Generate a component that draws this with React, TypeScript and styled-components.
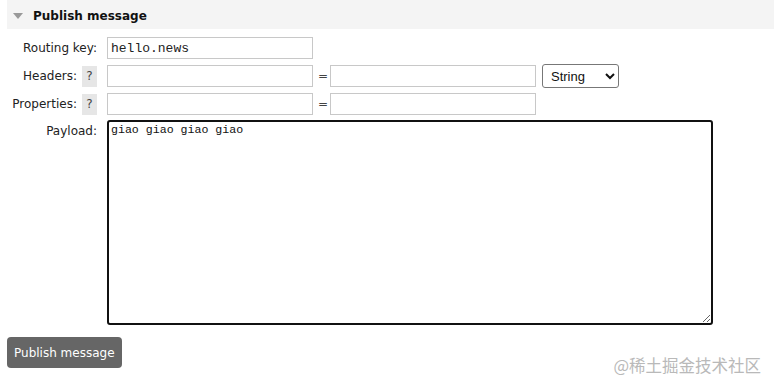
import styled, { createGlobalStyle } from "styled-components";

const GlobalStyle = createGlobalStyle`
    body {
        margin: 0;
        background: #fff;
        font-family: "DejaVu Sans", Verdana, sans-serif;
        font-size: 12px;
        color: #333;
    }
`;

const Page = styled.div`
    position: relative;
    width: 774px;
    height: 389px;
    padding-left: 7px;
    box-sizing: border-box;
`;

const Header = styled.h2`
    display: flex;
    align-items: center;
    gap: 10px;
    margin: 0;
    height: 29px;
    padding: 2px 0 0 6px;
    box-sizing: border-box;
    background: #f4f4f4;
    font-size: 12px;
    font-weight: bold;
    color: #111;
`;

const Arrow = styled.span`
    width: 0;
    height: 0;
    border-left: 5px solid transparent;
    border-right: 5px solid transparent;
    border-top: 6px solid #999;
    margin-top: 1px;
`;

const Form = styled.div`
    display: grid;
    grid-template-columns: 90px 1fr;
    column-gap: 10px;
    row-gap: 5px;
    margin-top: 8px;
`;

const Label = styled.div`
    display: flex;
    justify-content: flex-end;
    align-items: center;
    gap: 5px;
    min-height: 22px;
    white-space: nowrap;
    color: #222;
`;

const Help = styled.span`
    display: inline-flex;
    justify-content: center;
    align-items: center;
    width: 15px;
    height: 21px;
    background: #e6e6e6;
    color: #444;
    font-size: 12px;
`;

const Fields = styled.div`
    display: flex;
    align-items: center;
`;

const Input = styled.input`
    width: 206px;
    height: 22px;
    box-sizing: border-box;
    border: 1px solid #c8c8c8;
    padding: 0 3px;
    font-family: "Liberation Mono", "Courier New", monospace;
    font-size: 13px;
    color: #222;
    outline: none;
`;

const Eq = styled.span`
    width: 7px;
    margin: 0 5px;
    color: #444;
`;

const Select = styled.select`
    width: 77px;
    height: 24px;
    margin-left: 6px;
    border: 1px solid #777;
    border-radius: 3px;
    padding: 0 2px 0 4px;
    font-family: "Liberation Sans", Arial, sans-serif;
    font-size: 13px;
    color: #111;
    background: #fff;
`;

const Payload = styled.textarea`
    display: block;
    width: 606px;
    height: 205px;
    box-sizing: border-box;
    border: 2px solid #111;
    border-radius: 3px;
    padding: 1px 2px;
    font-family: "Liberation Mono", "Courier New", monospace;
    font-size: 11.6px;
    color: #111;
    resize: both;
    outline: none;
`;

const PayloadLabel = styled(Label)`
    align-items: flex-start;
    padding-top: 4px;
`;

const Button = styled.button`
    margin-top: 12px;
    height: 31px;
    padding: 0 7px;
    border: none;
    border-radius: 4px;
    background: #666;
    color: #fff;
    font-family: "DejaVu Sans", Verdana, sans-serif;
    font-size: 12px;
`;

const Watermark = styled.div`
    position: absolute;
    right: 13px;
    bottom: 12px;
    font-family: "Noto Sans CJK SC", sans-serif;
    font-size: 16.5px;
    color: #b9b9b9;
`;

export default function App() {
    return (
        <Page>
            <GlobalStyle />
            <Header>
                <Arrow />
                Publish message
            </Header>
            <Form>
                <Label>Routing key:</Label>
                <Fields>
                    <Input defaultValue="hello.news" />
                </Fields>
                <Label>
                    Headers: <Help>?</Help>
                </Label>
                <Fields>
                    <Input />
                    <Eq>=</Eq>
                    <Input />
                    <Select defaultValue="String">
                        <option>String</option>
                        <option>Number</option>
                        <option>Boolean</option>
                        <option>List</option>
                    </Select>
                </Fields>
                <Label>
                    Properties: <Help>?</Help>
                </Label>
                <Fields>
                    <Input />
                    <Eq>=</Eq>
                    <Input />
                </Fields>
                <PayloadLabel>Payload:</PayloadLabel>
                <Payload defaultValue="giao giao giao giao" />
            </Form>
            <Button>Publish message</Button>
            <Watermark>@稀土掘金技术社区</Watermark>
        </Page>
    );
}
